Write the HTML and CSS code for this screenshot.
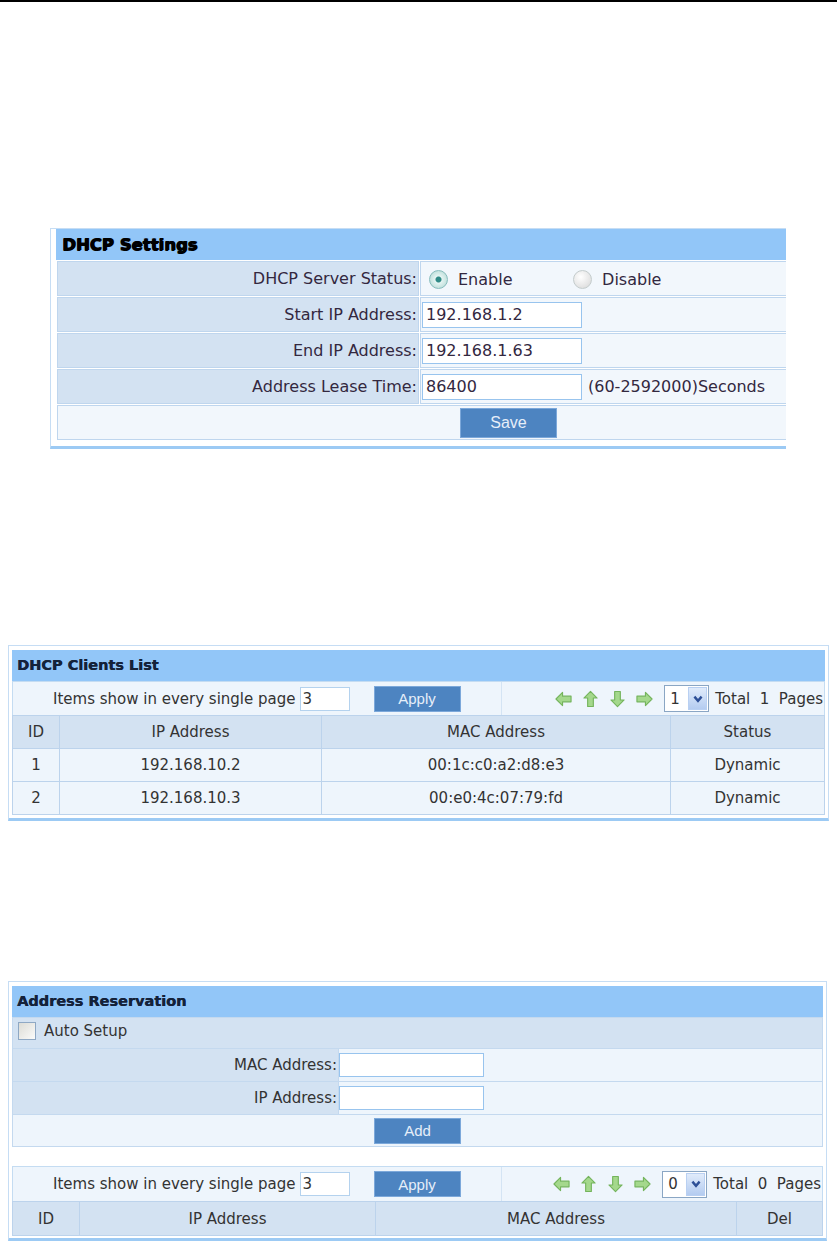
FILE: index.html
```html
<!DOCTYPE html>
<html lang="en">
<head>
  <meta charset="UTF-8" />
  <meta name="viewport" content="width=device-width, initial-scale=1.0" />
  <title>DHCP Server</title>
  <link rel="stylesheet" href="styles.css">
</head>
<body>
  <div class="rule"></div>

  <!-- DHCP settings -->
  <div class="panel settings">
    <div class="panel-title">DHCP Settings</div>
    <table class="form">
      <tr>
        <td class="label">DHCP Server Status:</td>
        <td class="field">
          <label class="opt"><input type="radio" name="dhcp" checked>Enable</label>
          <label class="opt"><input type="radio" name="dhcp">Disable</label>
        </td>
      </tr>
      <tr>
        <td class="label">Start IP Address:</td>
        <td class="field"><input type="text" class="text" value="192.168.1.2"></td>
      </tr>
      <tr>
        <td class="label">End IP Address:</td>
        <td class="field"><input type="text" class="text" value="192.168.1.63"></td>
      </tr>
      <tr>
        <td class="label">Address Lease Time:</td>
        <td class="field"><input type="text" class="text" value="86400"><span class="hint">(60-2592000)Seconds</span></td>
      </tr>
      <tr>
        <td class="save-row" colspan="2"><button class="btn save">Save</button></td>
      </tr>
    </table>
  </div>

  <!-- clients list -->
  <div class="panel clients">
    <div class="panel-title">DHCP Clients List</div>
    <div class="pager">
      <div class="pager-left">
        <span>Items show in every single page</span>
        <input type="text" class="num" value="3">
        <button class="btn apply">Apply</button>
      </div>
      <div class="pager-right">
        <svg class="arr" viewBox="0 0 18 18"><polygon points="1,9 8,2 8,6 17,6 17,12 8,12 8,16"/></svg>
        <svg class="arr" viewBox="0 0 18 18"><polygon points="9,1 16,8 12,8 12,17 6,17 6,8 2,8"/></svg>
        <svg class="arr" viewBox="0 0 18 18"><polygon points="9,17 16,10 12,10 12,1 6,1 6,10 2,10"/></svg>
        <svg class="arr" viewBox="0 0 18 18"><polygon points="17,9 10,2 10,6 1,6 1,12 10,12 10,16"/></svg>
        <div class="pagesel"><span>1</span><span class="drop"><svg viewBox="0 0 10 10"><polyline points="2,3 5,6.5 8,3"/></svg></span></div>
        <span class="total">Total&nbsp; 1&nbsp; Pages</span>
      </div>
    </div>
    <table class="grid">
      <tr class="head">
        <td style="width: 46px">ID</td>
        <td style="width: 261px">IP Address</td>
        <td style="width: 348px">MAC Address</td>
        <td>Status</td>
      </tr>
      <tr>
        <td>1</td>
        <td>192.168.10.2</td>
        <td>00:1c:c0:a2:d8:e3</td>
        <td>Dynamic</td>
      </tr>
      <tr>
        <td>2</td>
        <td>192.168.10.3</td>
        <td>00:e0:4c:07:79:fd</td>
        <td>Dynamic</td>
      </tr>
    </table>
  </div>

  <!-- address reservation -->
  <div class="panel reserve">
    <div class="panel-title">Address Reservation</div>
    <table class="form2">
      <tr class="auto">
        <td colspan="2"><label class="check"><input type="checkbox">Auto Setup</label></td>
      </tr>
      <tr>
        <td class="label">MAC Address:</td>
        <td class="field"><input type="text" class="text small"></td>
      </tr>
      <tr>
        <td class="label">IP Address:</td>
        <td class="field"><input type="text" class="text small"></td>
      </tr>
      <tr class="add-row">
        <td colspan="2"><button class="btn apply">Add</button></td>
      </tr>
    </table>
    <div class="spacer"></div>
    <div class="pager">
      <div class="pager-left">
        <span>Items show in every single page</span>
        <input type="text" class="num" value="3">
        <button class="btn apply">Apply</button>
      </div>
      <div class="pager-right">
        <svg class="arr" viewBox="0 0 18 18"><polygon points="1,9 8,2 8,6 17,6 17,12 8,12 8,16"/></svg>
        <svg class="arr" viewBox="0 0 18 18"><polygon points="9,1 16,8 12,8 12,17 6,17 6,8 2,8"/></svg>
        <svg class="arr" viewBox="0 0 18 18"><polygon points="9,17 16,10 12,10 12,1 6,1 6,10 2,10"/></svg>
        <svg class="arr" viewBox="0 0 18 18"><polygon points="17,9 10,2 10,6 1,6 1,12 10,12 10,16"/></svg>
        <div class="pagesel"><span>0</span><span class="drop"><svg viewBox="0 0 10 10"><polyline points="2,3 5,6.5 8,3"/></svg></span></div>
        <span class="total">Total&nbsp; 0&nbsp; Pages</span>
      </div>
    </div>
    <table class="grid">
      <tr class="head tall">
        <td style="width: 66px">ID</td>
        <td style="width: 295px">IP Address</td>
        <td style="width: 360px">MAC Address</td>
        <td>Del</td>
      </tr>
    </table>
  </div>
</body>
</html>
```

FILE: styles.css
```css
body {
  margin: 0;
  font-family: "DejaVu Sans", sans-serif;
  color: #333;
  background: #fff;
}
.rule {
  height: 2px;
  background: #000;
}

.panel {
  box-sizing: border-box;
  border: 1px solid #c6ddf4;
  border-bottom: 3px solid #9ccaf4;
  background: #fff;
  overflow: hidden;
}
.panel-title {
  height: 31px;
  line-height: 31px;
  background: #92c6f8;
  font-weight: bold;
  white-space: nowrap;
}

/* settings */
.settings {
  margin: 226px 0 0 50px;
  width: 736px;
  border-right: none;
  padding: 0 0 5px 5px;
}
.settings .panel-title {
  padding-left: 6px;
  font-size: 16.5px;
  color: #000;
  text-shadow: 1px 0 0 #000, 0 1px 0 #000;
}
.form {
  width: 740px;
  border-spacing: 1px;
  font-size: 16px;
  color: #33283f;
}
.form td {
  height: 33px;
  padding: 0;
  border: 1px solid #bfd6ee;
  white-space: nowrap;
}
.form .label {
  width: 359px;
  padding-right: 1px;
  text-align: right;
  background: #d3e2f2;
}
.form .field {
  padding-left: 1px;
  background: #f2f7fc;
}
.form .save-row {
  padding-left: 402px;
  background: #f2f7fc;
}
.opt {
  display: inline-flex;
  align-items: center;
  width: 139px;
  vertical-align: middle;
}
.opt:first-child {
  margin-left: 7px;
}
.opt input {
  appearance: none;
  width: 19px;
  height: 19px;
  margin: 0 10px 0 0;
  border: 1px solid #c4cccc;
  border-radius: 50%;
  background: radial-gradient(circle at 40% 35%, #ffffff, #d6d6d6);
  box-sizing: border-box;
}
.opt input:checked {
  border-color: #86bcbc;
  background: radial-gradient(circle, #2f8a86 0 2.5px, #e4f4f2 3.5px, #c4e2de 70%, #a6d2ce);
}
.text {
  box-sizing: border-box;
  width: 160px;
  height: 26px;
  padding: 0 3px;
  border: 1px solid #98c4ee;
  font-family: "DejaVu Sans", sans-serif;
  font-size: 16px;
  color: #33283f;
  vertical-align: middle;
}
.hint {
  margin-left: 6px;
  vertical-align: middle;
}

.btn {
  box-sizing: border-box;
  border: 1px solid #7ca8da;
  background: #4d84c1;
  color: #e6eef9;
  font-family: "Liberation Sans", sans-serif;
  padding: 0;
}
.save {
  width: 97px;
  height: 30px;
  font-size: 16px;
  vertical-align: middle;
}
.apply {
  width: 87px;
  height: 26px;
  font-size: 15px;
}

/* clients + reservation */
.clients {
  margin: 196px 0 0 8px;
  width: 821px;
  padding: 4px 3px 3px 3px;
}
.reserve {
  margin: 160px 0 0 8px;
  width: 819px;
  padding: 4px 3px 2px 3px;
}
.clients .panel-title,
.reserve .panel-title {
  padding-left: 5px;
  font-size: 14.5px;
  color: #14223a;
  text-shadow: 0.4px 0 0 #14223a;
}

.pager {
  box-sizing: border-box;
  display: flex;
  height: 34px;
  background: #eef5fc;
  border: 1px solid #c4dcf2;
  border-bottom: none;
  font-size: 15px;
  white-space: nowrap;
}
.reserve .pager {
  height: 35px;
}
.pager-left {
  width: 488px;
  padding-left: 40px;
  box-sizing: border-box;
  display: flex;
  align-items: center;
}
.num {
  box-sizing: border-box;
  width: 50px;
  height: 24px;
  margin: 0 0 0 4px;
  padding: 0 2px;
  border: 1px solid #b4d2ee;
  font-family: "DejaVu Sans", sans-serif;
  font-size: 15px;
  color: #333;
}
.pager-left .btn {
  margin-left: 24px;
}
.pager-right {
  flex: 1;
  display: flex;
  align-items: center;
  justify-content: flex-end;
  padding-right: 1px;
  border-left: 1px solid #d4e4f4;
}
.arr {
  width: 17px;
  height: 18px;
  margin-left: 10px;
}
.arr polygon {
  fill: #a4d88c;
  stroke: #74b45c;
  stroke-width: 1.2;
  stroke-linejoin: round;
}
.pagesel {
  box-sizing: border-box;
  display: flex;
  align-items: center;
  width: 45px;
  height: 27px;
  margin-left: 11px;
  border: 1px solid #8aa6c4;
  background: #fff;
}
.pagesel span:first-child {
  padding-left: 5px;
}
.drop {
  box-sizing: border-box;
  display: flex;
  align-items: center;
  justify-content: center;
  width: 19px;
  height: 23px;
  margin: 0 1px 0 auto;
  border: 1px solid #b9d0f2;
  background: linear-gradient(#e0ebfb, #b4ccf0);
}
.drop svg {
  width: 12px;
  height: 12px;
}
.drop polyline {
  fill: none;
  stroke: #2d4f96;
  stroke-width: 2;
}
.total {
  margin-left: 6px;
}

.grid {
  width: 100%;
  border-collapse: collapse;
  font-size: 15px;
  color: #333;
}
.grid td {
  height: 32px;
  padding: 0;
  border: 1px solid #bcd3ec;
  text-align: center;
  background: #eef5fc;
}
.grid .head td {
  background: #d3e2f2;
}
.grid .tall td {
  height: 33px;
}

.form2 {
  width: 100%;
  border-collapse: collapse;
  font-size: 15px;
  color: #333;
}
.form2 td {
  height: 32px;
  padding: 0;
  border: 1px solid #c4d9ef;
  background: #eef5fc;
  white-space: nowrap;
}
.form2 .auto td {
  height: 30px;
  background: #d3e2f2;
  padding-left: 5px;
}
.form2 .label {
  width: 324px;
  padding-right: 1px;
  text-align: right;
  background: #d3e2f2;
}
.form2 .add-row td {
  height: 31px;
  text-align: center;
}
.check {
  display: inline-flex;
  align-items: center;
}
.check input {
  appearance: none;
  box-sizing: border-box;
  width: 18px;
  height: 18px;
  margin: 0 8px 0 0;
  border: 1px solid #8ea8c4;
  background: linear-gradient(135deg, #dcdcd6, #fbfbfa);
}
.small {
  width: 145px;
  height: 24px;
  font-size: 15px;
}
.spacer {
  height: 19px;
}
```
